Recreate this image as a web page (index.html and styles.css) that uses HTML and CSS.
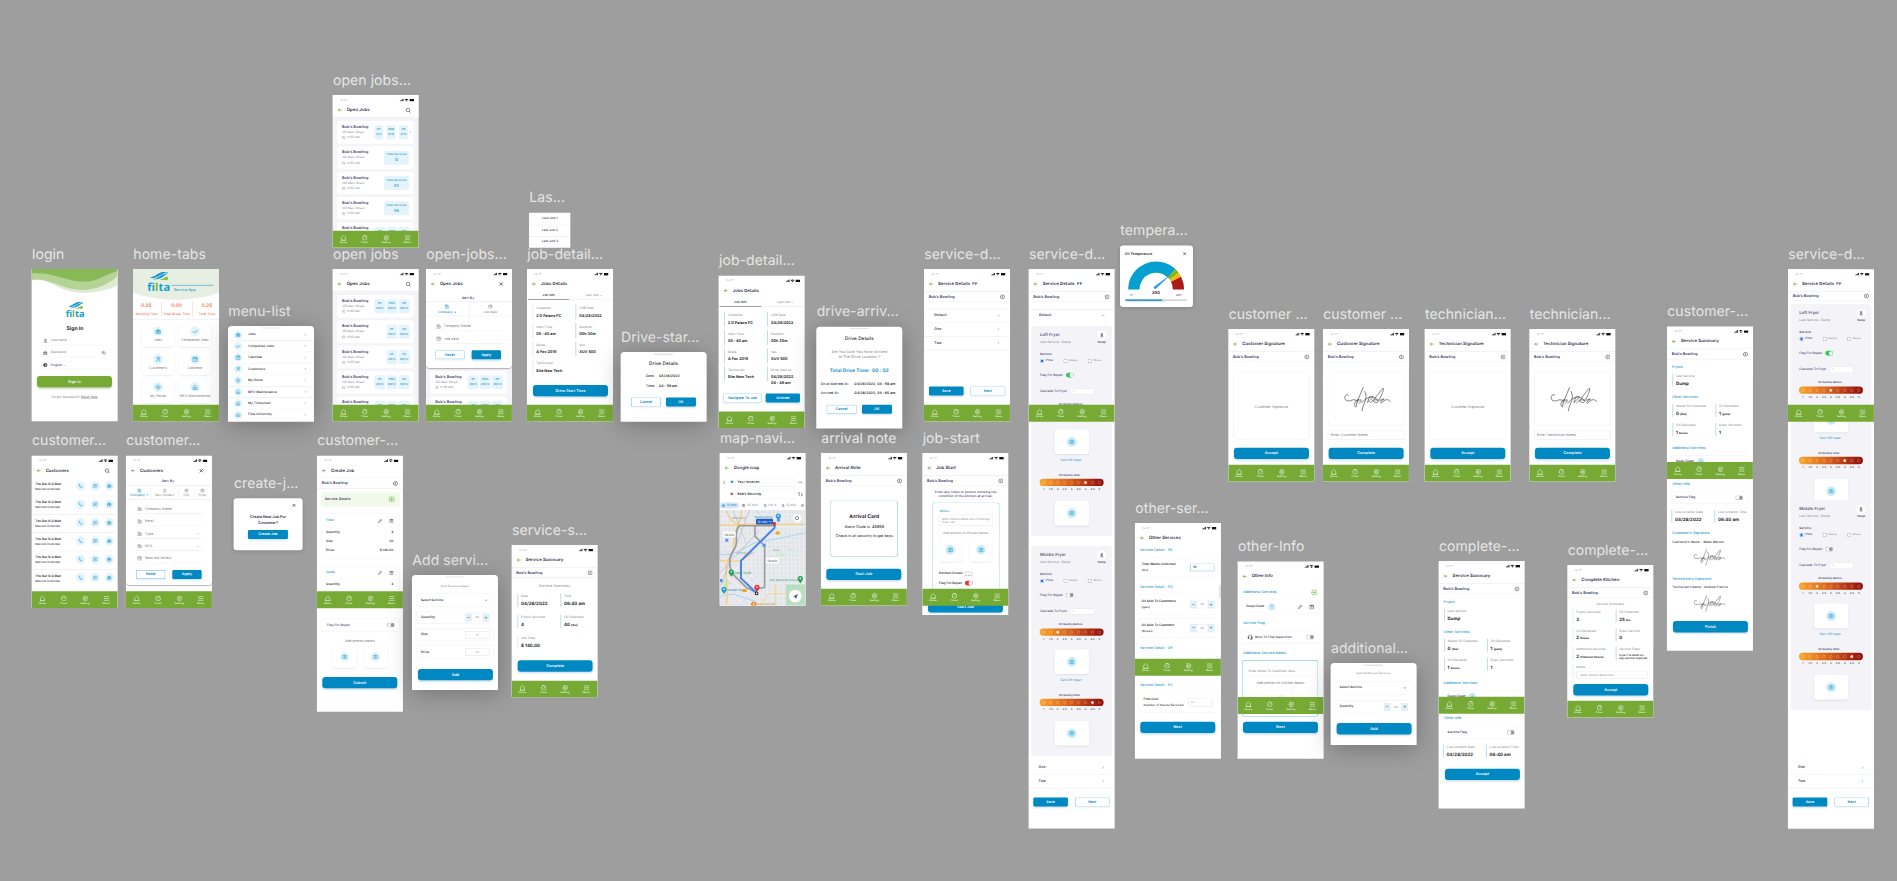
FILE: index.html
```html
<!DOCTYPE html>
<html lang="en">
<head>
<meta charset="utf-8">
<title>Filta Service App – screens</title>
<link rel="stylesheet" href="styles.css">
</head>
<body>
<main class="board"><div class="canvas" id="canvas"></div></main>
<script src="board.js"></script>
</body>
</html>
```

FILE: styles.css
```css
* { box-sizing: border-box; }
body { margin: 0; background: #9e9e9e; font-family: Inter, "Liberation Sans", sans-serif; }
.board { width: 1897px; height: 881px; overflow: hidden; position: relative; background: #9e9e9e; }
/* The canvas is drawn in units of a third of a pixel. The minute rotation keeps
   tiny type from being snapped to whole pixels. */
.canvas { position: absolute; left: 0; top: 0; width: 5691px; height: 2643px; transform: scale(0.333333) rotate(0.004deg); transform-origin: 0 0; line-height: 1; color: #2b2b3a; text-rendering: geometricPrecision; }

.label { position: absolute; font-size: 42px; line-height: 50px; color: #e6e6e6; white-space: nowrap; letter-spacing: 0.2px; }
.frame { position: absolute; overflow: hidden; background: #fff; letter-spacing: .012em; font-weight: 500; }
.sheet { border-radius: 11px 11px 0 0; box-shadow: 0 10px 70px rgba(0,0,0,.27); }
.dialog { border-radius: 9px; box-shadow: 0 2px 14px rgba(0,0,0,.16); }
.listbg { background: #f4f4f9; }

.stack { display: flex; flex-direction: column; align-items: flex-start; }
.stack > * { flex: none; }
.row { display: grid; height: 12px; align-items: center; align-self: stretch; }
.row > div { display: flex; align-items: center; white-space: nowrap; width: 0; height: 0; }
.mid { display: flex; width: 0; flex: none; justify-content: center; align-items: center; }
.end { display: flex; width: 0; flex: none; justify-content: flex-end; align-items: center; }
.row span, .row svg, .chip { flex: none; }
.ic { display: block; fill: none; stroke: currentColor; stroke-width: 2.2; stroke-linecap: round; stroke-linejoin: round; }
.ic.thick { stroke-width: 3.8; }
.art { display: block; }

.nav { position: absolute; left: 0; top: 407px; width: 100%; height: 51px; background: #76aa35; color: #fff; display: flex; }
.nav div { width: 64px; padding-top: 13px; display: flex; flex-direction: column; align-items: center; gap: 2px; font-size: 7.5px; }

/* surfaces */
.white { background: #fff; }
.line { background: #efeff2; }
.grey { background: #c9c9cc; }
.dark { background: #85858c; }
.orange-line { background: #fbd9cb; }
.sky { background: #b9dff0; }
.pale { background: #e0effb; }
.card { background: #fff; border-radius: 9px; box-shadow: inset 0 0 0 1.5px #f0f0f2; }
.job { background: #fff; border-radius: 8px; }
.tile { background: #fff; border-radius: 9px; box-shadow: 0 3px 6px rgba(60,70,90,.1); }
.mint { background: #f1f9eb; border-radius: 9px; }
.panel { background: #f3f3f8; border-radius: 10px; }
.bluebox { border-radius: 9px; box-shadow: inset 0 0 0 2px #8fcde8; }
.sigbox { border-radius: 13px; box-shadow: inset 0 0 0 1.5px #e9e9ec; }
.drop { background: #fff; border-radius: 0 0 12px 12px; box-shadow: 0 3px 4px rgba(0,0,0,.3); }
.input { background: #fff; border-radius: 3px; box-shadow: inset 0 0 0 1.5px #dedee2; }
.input.on { box-shadow: inset 0 0 0 2px #86c8e6; }
.mapfield { border-radius: 4px; background: #fff; box-shadow: inset 0 0 0 1.5px #ececee; }
.thumb { background: #e2e2e4; border-radius: 3px; }
.tabon { background: #d7e5fd; border-radius: 6px; }

/* fixed-size pieces that sit inside rows */
.chip { display: flex; align-items: center; justify-content: center; flex-direction: column; gap: 6px; }
.btn { background: #0088c2; color: #fff; font-weight: 600; font-size: 11.2px; border-radius: 9px; box-shadow: 0 4px 6px rgba(0,90,140,.2); }
.btn.green { background: #76aa35; box-shadow: 0 4px 6px rgba(70,110,30,.3); }
.btn.sm { border-radius: 4px; font-size: 10.6px; }
.btn.out { background: #fff; color: #0088c2; box-shadow: inset 0 0 0 1.5px #62b6da, 0 3px 5px rgba(0,90,140,.1); }
.count { background: #e5f3fb; border-radius: 5px; color: #2e9cc9; font-size: 8.6px; font-weight: 600; }
.count .big { font-size: 11px; }
.disc { border-radius: 50%; background: #e4f4fc; color: #1795cb; }
.disc.deep { background: #cbe9f6; }
.disc.plain { background: #fff; color: #333; }
.radio { border-radius: 50%; background: #fff; box-shadow: inset 0 0 0 1.5px #a5a5ad; }
.radio.on { background: #fff; box-shadow: inset 0 0 0 1px #5c93f5; }
.radio.on::after { content: ""; width: 7px; height: 7px; border-radius: 50%; background: #1264f0; }
.toggle { border-radius: 8px; background: #fff; box-shadow: inset 0 0 0 1.5px #a9a9ad; align-items: flex-end; padding: 1px; }
.toggle::after { content: ""; width: 11px; height: 12px; border-radius: 6px; background: #9c9ca0; }
.toggle.left { align-items: flex-start; }
.toggle.left::after { background: #fff; box-shadow: 0 0 0 1px #a9a9ad; }
.toggle.on { background: #34c759; box-shadow: none; }
.toggle.red { background: #f0302c; box-shadow: none; }
.toggle.on::after, .toggle.red::after { background: #fff; }
.stepper { flex-direction: row; gap: 0; justify-content: space-between; border-radius: 4px; background: #fff; box-shadow: inset 0 0 0 1px #e3eef4; overflow: hidden; font-size: 8px; color: #999; }
.stepper b { width: 21px; height: 100%; background: #e1f0f8; color: #146f9c; display: flex; align-items: center; justify-content: center; font-size: 13px; }
.scale { border-radius: 11px; background: linear-gradient(90deg, #faa62b, #d8641c 45%, #a5210f 85%, #8c0d0b); flex-direction: row; gap: 0; justify-content: space-around; padding: 0 2px; }
.scale i { width: 9px; height: 9px; border-radius: 50%; border: 1.4px solid rgba(255,255,255,.65); }
.scale i.on { background: #fff; border: 2px solid #ffd9c8; }
.ticks { flex-direction: row; gap: 0; justify-content: space-around; padding: 0 2px; font-size: 7.5px; color: #333; font-weight: 600; }
.ticks span { width: 18px; text-align: center; }

/* type */
.time { font-size: 8.5px; color: #8a8a8a; font-weight: 300; }
.title { font-size: 12.9px; font-weight: 600; color: #23233a; }
.name { font-size: 11.2px; font-weight: 600; color: #3a3b6c; }
.jobname { font-size: 11.4px; font-weight: 600; color: #41416f; }
.h1 { font-size: 15px; font-weight: 700; color: #222; letter-spacing: .01em; }
.h2 { font-size: 14px; font-weight: 500; color: #222; }
.total { font-size: 14.2px; font-weight: 700; color: #1b95c9; letter-spacing: .01em; }
.t8 { font-size: 8px; } .t85 { font-size: 8.8px; } .t9 { font-size: 9.3px; } .t95 { font-size: 9.7px; } .t10 { font-size: 10.3px; } .t11 { font-size: 11px; } .t12 { font-size: 12.6px; } .t7 { font-size: 7.6px; }
.b { font-weight: 600; color: #1e1e24; }
.m { font-weight: 600; }
.g { color: #7c7c86; font-weight: 400; }
.lg { color: #b3b3ba; }
.navy { color: #3f4069; }
.blue { color: #2299cc; }
.orange { color: #f0754e; }
.greenink { color: #6faa2f; }
.redink { color: #e5433a; }
.darkink { color: #2c2c35; }
.value { font-size: 10.9px; font-weight: 700; color: #1c1c22; }
.value.big { font-size: 13px; }
.value small { font-size: 8.6px; }
.head { font-size: 10.6px; color: #2299cc; font-weight: 500; }
.reset { text-decoration: underline; color: #555; }
.logo { font-family: "Open Sans", sans-serif; font-weight: 700; letter-spacing: 0; }
```

FILE: board.js
```js
const ICONS = {
  arrow: 'M20 12H5M11 6l-6 6 6 6',
  search: 'M4 11a7.500 7.500 0 1 0 15 0a7.500 7.500 0 1 0-15 0M17 17l4 4',
  x: 'M5 5l14 14M19 5L5 19',
  minus: 'M3 12h18',
  info: 'M2 12a10 10 0 1 0 20 0a10 10 0 1 0-20 0M12 11v6M12 7v1',
  home: 'M3 21V10l9-8 9 8v11zM1 22h22',
  timer: 'M2 12a10 10 0 1 0 20 0a10 10 0 1 0-20 0M12 13l5-5M8 1h8',
  gear: 'M12 2l4 2 5 0 1 5 1 3-3 4-2 5-6 1-5-1-3-5-2-4 3-4 2-5zM8 12a4 4 0 1 0 8 0a4 4 0 1 0-8 0',
  menu: 'M2 4h20M2 12h20M2 20h20',
  jobs: 'M3 8h18v13H3zM8 8V4h8v4M3 13h18M12 11v7M9 15h6',
  done: 'M1 12l5 5L14 9M11 16l2 2L23 7',
  cal: 'M3 5h18v16H3zM3 10h18M8 2v5M16 2v5M10 15l2 2 4-4',
  users: 'M7 8a5 5 0 1 0 10 0a5 5 0 1 0-10 0M4 22c0-10 16-10 16 0M18 3c4 2 4 7 0 9',
  user: 'M7 8a5 5 0 1 0 10 0a5 5 0 1 0-10 0M4 22c0-10 16-10 16 0z',
  route: 'M12 1l11 11-11 11L1 12zM8 12a4 4 0 1 0 8 0a4 4 0 1 0-8 0',
  house: 'M3 11l9-9 9 9v11H3zM9 13h6v5H9z',
  phone: 'M5 3l4 5-2 3 7 7 3-2 4 4-4 2C10 20 4 14 3 6z',
  chat: 'M3 4h18v14H9l-6 4zM8 9h8M8 13h5',
  cam: 'M2 6h20v14H2zM8 13a4 4 0 1 0 8 0a4 4 0 1 0-8 0M8 3h8',
  pencil: 'M3 21l2-6L18 3l3 3L9 19zM14 7l3 3',
  trash: 'M4 6h16v16H4zM2 6h20M9 2h6M12 10v6',
  plus: 'M1 12a11 11 0 1 0 22 0a11 11 0 1 0-22 0M12 6v12M6 12h12',
  chev: 'M9 5l7 7-7 7',
  down: 'M5 9l7 7 7-7',
  left: 'M15 4l-8 8 8 8',
  eye: 'M1 12c6-9 16-9 22 0c-6 9-16 9-22 0M9 12a3 3 0 1 0 6 0a3 3 0 1 0-6 0M3 3l18 18',
  lock: 'M3 11h18v11H3zM7 11c0-11 10-11 10 0M8 16h8',
  globe: 'M3 12a9 9 0 1 0 18 0a9 9 0 1 0-18 0M7 12a5 5 0 1 0 10 0a5 5 0 1 0-10 0',
  clock: 'M2 12a10 10 0 1 0 20 0a10 10 0 1 0-20 0M12 6v6l5 3',
  firm: 'M3 22V3h10v19M13 9h8v13H2M6 8h4M6 13h4M16 14h2',
  head: 'M4 15V10c0-10 16-10 16 0v5M4 12v6h3v-6zM17 12v6h3v-6zM20 18c0 4-4 4-7 4',
  therm: 'M9 14V3h6v11a5 5 0 1 1-6 0M12 8v9',
  swap: 'M5 4v12l4 4M5 4L2 8M18 20V7M18 20l4-4'
};
const ic = (n, s = 12, c = '') => `<svg class="ic ${c}" width="${s}" height="${s}" viewBox="0 0 24 24"><path d="${ICONS[n]}"/></svg>`;
const t = (c, s) => `<span class="${c}">${s}</span>`;
const mid = h => `<span class="mid">${h}</span>`;
const end = h => `<span class="end">${h}</span>`;
const chip = (w, h, c, html = '') => `<span class="chip ${c}" style="width:${w}px;height:${h}px">${html}</span>`;
const disc = (n, s = 28, i = 14, c = '') => mid(chip(s, s, 'disc ' + c, ic(n, i)));

/* A stack places its children one below the other; gaps follow from each child's y */
function stack(kids) {
  let at = 0;
  return kids.flat(9).map(k => { const m = k.y - at; at = k.y + k.h; return k.html(m); }).join('');
}
const row = (cy, ...cells) => ({ y: cy - 6, h: 12, html: m => {
  const cols = cells.map((c, i) => i < cells.length - 1 ? (cells[i + 1][0] - c[0]) + 'px' : 'auto').join(' ');
  return `<div class="row" style="margin-top:${m}px;padding-left:${cells[0][0]}px;grid-template-columns:${cols}">${cells.map(c => `<div>${c[1]}</div>`).join('')}</div>`;
} });
const box = (x, y, w, h, c, kids = []) => ({ y, h, html: m => `<div class="stack ${c}" style="margin:${m}px 0 0 ${x}px;width:${w}px;height:${h}px">${stack(kids)}</div>` });
const art = (x, y, w, h, body) => ({ y, h, html: m => `<svg class="art" style="margin:${m}px 0 0 ${x}px" width="${w}" height="${h}" viewBox="0 0 ${w} ${h}">${body}</svg>` });
const rule = (y, x = 0, w = 258) => box(x, y, w, 1.5, 'line');

const NAV = '<div class="nav">' + [['home', 'Home'], ['timer', 'Timer'], ['gear', 'Setting'], ['menu', 'Menu']].map(([i, l]) => `<div>${ic(i, 17)}${l}</div>`).join('') + '</div>';
const STATUS = '<svg class="art" width="44" height="10" viewBox="0 0 44 10"><path d="M0 9V7h2v2zM3 9V5h2v4zM6 9V3h2v6zM9 9V1h2.500v8zM15 4c3-4 8-4 11 0l-1.500 1.500c-2-2-6-2-8 0zM18 7c1-2 4-2 5 0l-2.500 3zM30 2h13v7H30z" fill="#111"/></svg>';

const label = (x, cy, s) => `<div class="label" style="left:${x}px;top:${cy - 25}px">${s}</div>`;
function frame(x, y, w, h, name, kids, { c = '', nav = true } = {}) {
  return label(x + 1, y - 45, name) + `<section class="frame stack ${c}" style="left:${x}px;top:${y}px;width:${w}px;height:${h}px">${stack(kids)}${nav ? NAV : ''}</section>`;
}
const head = (title, right = '') => [
  row(15, [22, t('time', '12:47')], [201, STATUS]),
  row(45, [21, mid(`<span class="greenink">${ic('arrow', 14, 'thick')}</span>`)], [42, t('title', title)], [226, mid(right ? `<span class="darkink">${ic(right, right === 'x' ? 14 : 17, right === 'x' ? 'thick' : '')}</span>` : '')]),
  rule(66)
];
const sub = (cy = 83) => [row(cy, [14, t('name', "Bob’s Bowling")], [235, mid(`<span class="darkink">${ic('info', 15)}</span>`)]), rule(cy + 14)];
const big = (x, y, s, c = '') => row(y + 17, [x, chip(225, 34, 'btn ' + c, s)]);
const pair = (y, x1, a, w1, x2, b, w2) => row(y, [x1, chip(w1, 27, 'btn sm ' + (a[1] || ''), a[0])], [x2, chip(w2, 27, 'btn sm ' + (b[1] || ''), b[0])]);
const handle = box(101, 5, 56, 2, 'grey');
const field = (cy, icon, s, right = '', x = 41) => [row(cy, [x, mid(`<span class="g">${ic(icon, 14)}</span>`)], [x + 16, t('t10 g', s)], [216, mid(right)]), rule(cy + 13, 27, 202)];
const toggle = (c = '') => chip(23, 14, 'toggle ' + c);
const stepper = chip(74, 25, 'stepper', '<b>−</b>00<b>+</b>');

const LOGO = s => `<g transform="scale(${s})"><path d="M14 21C24 19 33 14 39 8C46 5 53 4 58 5C52 6 47 10 41 15C34 19 24 22 14 21z" fill="#1d9fd2"/><path d="M7 15C20 15 26 5 40 1C48 0 54 1 57 2C43 4 36 12 29 15C20 19 13 18 7 15z" fill="#1592c8"/><path d="M20 16C32 15 36 6 51 3" stroke="#fff" stroke-width="1.500" fill="none"/><path d="M31 23C40 22 45 17 51 14C56 13 58 19 53 24C50 20 43 23 31 23z" fill="#82bb2e"/><text class="logo" x="0" y="51" font-size="30" fill="#129fd1" textLength="62">fi<tspan fill="#7ab52f">l</tspan>ta</text></g>`;

const login = frame(95, 807, 258, 457, 'login', [
  art(0, 0, 258, 75, '<path d="M0 0H258V50C190 78 130 76 84 56C50 40 24 26 0 34z" fill="#dfead2"/><path d="M0 0H258V20C220 55 170 72 112 58C64 44 36 26 0 33z" fill="#b6d397"/><path d="M0 0H258V6C218 16 206 36 160 38C105 38 62 8 0 13z" fill="#87b956"/>'),
  art(102, 98, 66, 56, LOGO(.92)),
  row(178, [130, mid(t('h1', 'Sign In'))]),
  row(214, [41, mid(ic('user', 13))], [57, t('t95 g', 'Username')]), rule(227, 27, 203),
  row(251, [41, mid(ic('lock', 14))], [57, t('t95 g', 'Password')], [216, mid(`<span class="g">${ic('eye', 14)}</span>`)]), rule(263, 27, 203),
  row(288, [41, mid(ic('globe', 14, 'thick'))], [57, t('t95 navy', 'English ⌄')]), rule(299, 27, 203),
  big(16, 321, 'Sign In', 'green'),
  row(386, [129, mid(t('t95 g', 'Forgot Password? <span class="reset">Reset Now</span>'))])
], { nav: false });

const tiles = [['jobs', 'Jobs', 'done', 'Completed Jobs'], ['users', 'Customers', 'cal', 'Calendar'], ['route', 'My Route', 'house', 'MFU Maintenance']];
const stat = s => mid(`<span class="h2 b"><span class="orange">${s}</span></span>`);
const home = frame(399, 807, 258, 457, 'home-tabs', [
  art(0, 0, 258, 95, `<path d="M0 0H258V72Q129 114 0 72z" fill="#e7efe2"/><g transform="translate(43 8)">${LOGO(1.11)}</g><path d="M115 49H242" stroke="#46a9d2" stroke-width="2"/>`),
  row(61, [122, t('t11 blue', 'Service App')]),
  row(111, [40, stat('0.25')], [131, stat('0.00')], [222, stat('0.25')]),
  row(120, [85, chip(1.5, 46, 'orange-line')], [178, chip(1.5, 46, 'orange-line')]),
  row(136, [41, mid(t('t95 orange', 'Working Time'))], [131, mid(t('t95 orange', 'Total Break Time'))], [222, mid(t('t95 orange', 'Total Time'))]),
  rule(151),
  tiles.map((a, i) => [
    row(197 + i * 84, [26, chip(98, 72, 'tile')], [137, chip(98, 72, 'tile')]),
    row(187 + i * 83.5, [75, disc(a[0], 30, 17)], [186, disc(a[2], 30, 17)]),
    row(213 + i * 83.5, [75, mid(t('t10 g', a[1]))], [186, mid(t('t10 g', a[3]))])])
]);

const menu = frame(684, 978, 258, 287, 'menu-list', [handle,
  [['jobs', 'Jobs'], ['done', 'Completed Jobs'], ['cal', 'Calendar'], ['users', 'Customers'], ['route', 'My Route'], ['house', 'MFU Maintenance'], ['house', 'My Timesheet'], ['house', 'Filta University']].map(([i, s], n) => [
    row(26 + n * 34.3, [30, disc(i, 25, 15)], [60, t('t95 darkink', s)], [232, mid(`<span class="blue">${ic('chev', 8, 'thick')}</span>`)]), n < 7 ? rule(43 + n * 34.3) : []])
], { nav: false, c: 'sheet' });

const jobCard = (y, chips) => box(13, y, 230, 68, 'job', [
  row(18, [15, t('jobname', "Bob’s Bowling")]),
  row(34, [15, t('t85 g', '123 Main Street')], ...chips),
  row(50, [20, mid(`<span class="g">${ic('clock', 10)}</span>`)], [29, t('t85 g', '11:00 AM')])
]);
const cnt = (w, a, b, big) => chip(w, 42, 'count', `<span>${a}</span><span class="${big ? 'big' : ''}">${b}</span>`);
const three = [[112, cnt(33, 'FF', '00/3')], [148.5, cnt(32, 'PRO', '00/12')], [185, cnt(33, 'FB', '00/12')]];
const two = [[148.5, cnt(32, 'FF', '00/3')], [185, cnt(33, 'FO', '00/12')]];
const jobsList = (list, start = 78) => list.map((c, i) => jobCard(start + i * 76, c));
const HB = box(0, 0, 258, 67, 'white', head('Open Jobs', 'search'));
const openA = frame(998, 285, 258, 458, 'open jobs...', [HB,
  jobsList([[[112, cnt(27, 'FF', '0/3')], [149, cnt(27, 'MIN', '0/10')], [186, cnt(27, 'FB', '0/12')], [220, mid(`<span class="blue">${ic('chev', 8, 'thick')}</span>`)]],
    ...['12', '03', '06'].map(n => [[141, cnt(75, 'Total Services', n, 1)]]), three])], { c: 'listbg' });
const openB = frame(998, 807, 258, 457, 'open jobs', [HB, jobsList([three, two, two, three, three])], { c: 'listbg' });
const tabs2 = (y) => [row(y, [63, mid(`<span class="blue">${ic('firm', 14)}</span>`)], [193, mid(`<span class="g">${ic('cal', 13)}</span>`)]),
  row(y + 17, [63, mid(t('t95 blue', 'Company ↓'))], [130, chip(1.5, 44, 'line')], [193, mid(t('t95 g', 'Job date'))])];
const openC = frame(1278, 807, 258, 457, 'open-jobs...', [
  box(0, 0, 258, 297, 'drop', [head('Open Jobs', 'x').slice(0, 2), row(86, [126, mid(t('t10 navy', 'Sort By'))]), rule(97),
    tabs2(112), rule(140), field(172, 'firm', 'Company Name', '', 38), field(209, 'cal', 'Job date', '', 38),
    pair(257, 28, ['Reset', 'out'], 88, 137, ['Apply'], 88)]),
  jobsList([three, three], 306)], { c: 'listbg' });

const pairCells = (y, a, b, o = {}) => {
  const x1 = o.x1 || 16, x2 = o.x2 || 145, v = o.v || 20, c = o.big ? 'value big' : 'value', g = o.gap || 12;
  return [row(y + v / 2, [x1, chip(3, o.h || 44, a[2] || 'sky')], ...(b ? [[x2, chip(3, o.h || 44, 'sky')]] : [])),
    row(y, [x1 + g, t('t9 g', a[0])], ...(b ? [[x2 + g, t('t9 g', b[0])]] : [])),
    row(y + v, [x1 + g, t(c, a[1])], ...(b ? [[x2 + g, t(c, b[1])]] : []))];
};
const detailTabs = [row(80, [65, mid(t('t9 m darkink', 'Job Info'))], [200, mid(t('t9 g', 'Last Job ⌄'))]), rule(91), box(3, 91, 124, 2, 'dark')];
const detail = frame(1581, 807, 258, 457, 'job-detail...', [head('Jobs Details').slice(0, 2), detailTabs,
  pairCells(119, ['Customer', '2 D Palace FC', 'pale'], ['JOB Date', '04/28/2022']),
  pairCells(174, ['Start Time', '05 : 40 am', 'pale'], ['Duration', '00h 30m']),
  pairCells(229, ['Route', 'A Foc 2019', 'pale'], ['Van', 'XUV 500']),
  pairCells(284, ['Technician', 'Bite New Tech', 'pale']),
  big(18, 348, 'Drive Start Time')]);
const detail2 = frame(2156, 827, 258, 457, 'job-detail...', [head('Jobs Details').slice(0, 2), detailTabs,
  pairCells(120, ['Customer', '2 D Palace FC'], ['JOB Date', '04/28/2022']),
  pairCells(175, ['Start Time', '05 : 40 am'], ['Duration', '00h 30m']),
  pairCells(230, ['Route', 'A Foc 2019'], ['Van', 'XUV 500']),
  pairCells(284, ['Technician', 'Bite New Tech'], ['Drive Start at', '04/28/2022']),
  row(320, [157, t('value', '04 : 48 am')]),
  pair(366, 14, ['Navigate To Job', 'out'], 115, 141, ['Arrived'], 103)]);

const last = frame(1587, 638, 124, 105, 'Las...', [row(18, [63, mid(t('t9', 'Last Job 1'))]), rule(36, 0, 124), row(53, [63, mid(t('t9', 'Last Job 2'))]), rule(70, 0, 124), row(87, [63, mid(t('t9', 'Last Job 3'))])], { nav: false });
const driveStart = frame(1862, 1056, 258, 209, 'Drive-star...', [handle, row(36, [129, mid(t('h2', 'Drive Details'))]),
  row(73, [75, t('t10', 'Date:')], [115, t('t10 b', '04/28/2022')]), row(101, [75, t('t10', 'Time:')], [115, t('t10 b', '04 : 58 am')]),
  pair(149, 31, ['Cancel', 'out'], 90, 136, ['OK'], 90)], { nav: false, c: 'sheet' });
const driveArr = frame(2449, 980, 258, 305, 'drive-arriv...', [handle, row(35, [129, mid(t('h2', 'Drive Details'))]),
  row(74, [129, mid(t('t11 g', 'Are You Sure You Have Arrived'))]), row(90, [129, mid(t('t11 g', 'At The Drive Location ?'))]),
  row(131, [129, mid(t('total', 'Total Drive Time: &nbsp;00 : 02'))]),
  row(173, [13, t('t10', 'Drive Started At:')], [114, t('t10 b', '04/28/2022, 04 : 58 am')]),
  row(200, [13, t('t10', 'Arrived At:')], [114, t('t10 b', '04/28/2022, 04 : 60 am')]),
  pair(247, 31, ['Cancel', 'out'], 90, 137, ['OK'], 90)], { nav: false, c: 'sheet' });

const item = (cy, s, i = 'chev', x = 31) => row(cy, [x, t('t10 m navy', s)], [223, mid(`<span class="blue">${ic(i, 9, 'thick')}</span>`)]);
const svcD = frame(2772, 807, 258, 457, 'service-d...', [head('Service Details &nbsp;FF'), sub(), rule(118), item(139, 'Default'), rule(160), item(180, 'One'), rule(201), item(221, 'Two'), rule(242),
  pair(365, 15, ['Save'], 104, 139, ['Next', 'out'], 105)]);

const scale = (cy, n) => [row(cy, [33, chip(192, 22, 'scale', Array.from({ length: 9 }, (_, i) => `<i class="${i === n ? 'on' : ''}"></i>`).join(''))]),
  row(cy + 22, [33, chip(192, 10, 'ticks', ['1', '1.5', '2', '2.5', '3', '3.5', '4', '4.5', '5'].map(v => `<span>${v}</span>`).join(''))])];
const photo = cy => [row(cy, [78, chip(103, 74, 'tile')]), row(cy, [129, disc('cam', 29, 15, 'deep')])];
const fryer = (y, name, on, n1, n2) => [box(8, y - 27, 242, 630, 'panel'),
  row(y, [34, t('t12 navy', name)], [219, disc('therm', 28, 15, 'plain')]),
  row(y + 23, [34, t('t9 g', 'Last Service : Dump')], [219, mid(t('t85 b', 'Temp'))]),
  row(y + 57, [34, t('t9 m navy', 'Service')]),
  row(y + 77, [34, chip(13, 13, 'radio on')], [52, t('t85 navy', 'Filter')], [104, chip(13, 13, 'radio')], [121, t('t85 g', 'Dump')], [177, chip(13, 13, 'radio')], [195, t('t85 g', 'None')]),
  row(y + 120, [34, t('t9 navy', 'Flag For Repair')], [112, toggle(on ? 'on' : '')]),
  row(y + 169, [34, t('t9 navy', 'Cascade To Fryer')], [125, chip(73, 21, 'input')], [132, t('t8 lg', '1')]),
  row(y + 208, [126, mid(t('t8 m navy', 'Oil Quality Before'))]), scale(y + 231, n1), photo(y + 320),
  row(y + 377, [126, mid(t('t9 blue', 'Turn Off Input'))]),
  row(y + 420, [123, mid(t('t8 m navy', 'Oil Quality After'))]), scale(y + 442, n2), photo(y + 534)];
const svcTail = [item(1495, 'One', 'chev', 30), rule(1516), item(1536, 'Two', 'chev', 30), rule(1556), pair(1598, 14, ['Save'], 104, 139, ['Next', 'out'], 104)];
const svcLong = frame(3086, 807, 258, 1678, 'service-d...', [head('Service Details &nbsp;FF'), sub(), rule(120), item(139, 'Default', 'minus'), fryer(198, 'Left Fryer', 1, 4, 6), fryer(858, 'Middle Fryer', 0, 2, 7), svcTail]);
const svcLast = frame(5364, 807, 258, 1679, 'service-d...', [head('Service Details &nbsp;FF'), sub(80), fryer(132, 'Left Fryer', 1, 4, 6), fryer(720, 'Middle Fryer', 0, 2, 7), svcTail]);

const pt = (r, a) => `${(84.5 + r * Math.cos(a * Math.PI / 180)).toFixed(1)} ${(86 - r * Math.sin(a * Math.PI / 180)).toFixed(1)}`;
const arc = (a, b, c) => `<path d="M${pt(84, a)}A84 84 0 0 1 ${pt(84, b)}L${pt(50, b)}A50 50 0 0 0 ${pt(50, a)}z" fill="${c}"/>`;
const temp = frame(3360, 736, 219, 185, 'tempera...', [
  row(25, [15, t('t10 b', 'Oil Temperature')], [194, mid(ic('x', 12, 'thick'))]),
  art(24, 46, 170, 92, arc(180, 46, '#059fd0') + arc(46, 36, '#86b80f') + arc(36, 27, '#f5b911') + arc(27, 0, '#ab1919') + '<path d="M77 79L132 38L84 84a5 5 0 0 1-7-5z" fill="#2d9df0"/>'),
  row(142, [108, mid(t('t12 b', '350'))]), row(149, [31, t('t7', '0°')], [168, t('t7', '450°')]),
  row(164, [16, chip(186, 4, 'grey')]), row(164, [16, chip(115, 4, 'btn')], [131, mid(chip(9, 9, 'radio'))])
], { nav: false, c: 'dialog' });

const customers = frame(95, 1367, 258, 457, 'customer...', [head('Customers', 'search').slice(0, 2), [0, 1, 2, 3, 4, 5].map(i => {
  const y = 91 + i * 55;
  return [row(y - 5, [11, t('t9 b', 'The Bar B Q Man')]), row(y, [147, disc('phone')], [191, disc('chat')], [233, disc('jobs')]), row(y + 9, [11, t('t8', 'Malcolm Cedric&amp;A.')]), i < 5 ? rule(y + 29) : []];
})]);
const dn = `<span class="g">${ic('down', 7, 'thick')}</span>`;
const customers2 = frame(378, 1367, 258, 457, 'customer...', [box(0, 0, 258, 388, 'drop', [head('Customers', 'x').slice(0, 2), row(77, [126, mid(t('t10 navy', 'Sort By'))]), rule(89),
  row(104, [40, mid(`<span class="blue">${ic('firm', 13)}</span>`)], [116, mid(`<span class="g">${ic('user', 13)}</span>`)], [181, mid(`<span class="g">${ic('globe', 13)}</span>`)], [229, mid(`<span class="g">${ic('cam', 13)}</span>`)]),
  row(110, [74, chip(1.5, 42, 'line')], [157, chip(1.5, 42, 'line')], [205, chip(1.5, 42, 'line')]),
  row(120, [40, mid(t('t95 blue', 'Company ↑'))], [116, mid(t('t95 g', 'Key contact'))], [181, mid(t('t95 g', 'City'))], [229, mid(t('t95 g', 'Fryer'))]), rule(131),
  field(160, 'firm', 'Company Name'), field(197, 'firm', 'Email'), field(234, 'firm', 'Type', dn), field(271, 'firm', 'NCA', dn), field(308, 'cal', 'Near me (miles)'),
  pair(356, 30, ['Reset', 'out'], 88, 139, ['Apply'], 88)])]);
const createJ = frame(701, 1495, 207, 156, 'create-j...', [row(21, [181, mid(ic('x', 12, 'thick'))]), row(56, [103, mid(t('t11 m', 'Create New Job For'))]), row(73, [103, mid(t('t11 m', 'Customer?'))]), row(108, [43, chip(120, 27, 'btn sm', 'Create Job')])], { nav: false, c: 'dialog' });

const kv = (y, k, v) => row(y, [27, t('t95 m', k)], [229, end(t('t9 m', v))]);
const svcHead = (y, s) => row(y, [27, t('t9 blue m', s)], [189, mid(ic('pencil', 13))], [223, mid(ic('trash', 13))]);
const createJob = frame(951, 1367, 258, 768, 'customer-...', [head('Create Job'), sub(),
  box(11, 111, 238, 42, 'mint', [row(20, [12, t('t10 m navy', 'Service Details')], [213, mid(`<span class="greenink">${ic('plus', 18)}</span>`)])]),
  box(11, 173, 237, 136, 'card'), svcHead(195, 'Filter'), kv(230, 'Quantity', '3'), kv(258, 'Size', '20'), kv(285, 'Price', '$ 140.00'),
  box(11, 332, 237, 120, 'card'), svcHead(351, 'Dump'), kv(387, 'Quantity', '3'),
  box(13, 488, 236, 40, 'card'), row(508, [30, t('t9 navy', 'Flag For Repair')], [210, toggle()]),
  row(557, [129, mid(t('t10 g', 'Add photos below'))]),
  row(602, [49, chip(69, 70, 'tile')], [141, chip(69, 70, 'tile')]), row(603, [83, disc('cam', 29, 15)], [175, disc('cam', 29, 15)]),
  big(16, 664, 'Submit')]);
const formRow = (y, s, right) => [box(12, y - 20, 234, 40, 'card'), row(y, [27, t('t95 m', s)], [159, right])];
const selectRow = (y) => [box(12, y - 20, 234, 40, 'card'), row(y, [27, t('t9 m', 'Select Service')], [222, mid(ic('down', 9, 'thick'))])];
const addServ = frame(1236, 1725, 258, 345, 'Add servi...', [handle, row(34, [129, mid(t('t85 g', 'Add Service Details'))]),
  selectRow(75), formRow(127, 'Quantity', stepper), formRow(179, 'Size', chip(74, 23, 'input t8 lg', '10')), formRow(231, 'Price', chip(74, 23, 'input t8 lg', '00')), big(18, 282, 'Add')], { nav: false, c: 'sheet' });
const B = { big: 1, v: 21, x1: 17, x2: 146, h: 40, gap: 11 };
const svcSum = frame(1535, 1635, 258, 457, 'service-s...', [head('Service Summary'), sub(), row(121, [129, mid(t('t11 g', 'Service Summary'))]),
  pairCells(155, ['Date', '04/28/2022'], ['Time', '06:40 am'], B), pairCells(218, ['Fryers Serviced', '4'], ['Oil Collected', '40 <small>(lbs)</small>'], B), pairCells(281, ['Job Total', '$ 140.00', 'pale'], null, B), big(18, 346, 'Complete')]);

let grid = '';
for (let i = 0; i < 24; i++) grid += `<path d="M${i * 12} 0V287M0 ${i * 13}H258" stroke="#f2f3f5" stroke-width="1.600"/>`;
const tag = (x, y, w, s, f, c) => `<rect x="${x}" y="${y}" width="${w}" height="17" rx="3" fill="${f}"/><text x="${x + w / 2}" y="${y + 12}" font-size="9.500" text-anchor="middle" fill="${c}">${s}</text>`;
const pin = (x, y, c) => `<path d="M${x} ${y + 12}l-7-10a8 8 0 1 1 14 0z" fill="${c}"/><circle cx="${x}" cy="${y - 3}" r="2.500" fill="#fff"/>`;
const MAP = `<rect width="258" height="287" fill="#e2e5e9"/>${grid}
<g transform="rotate(40 60 220)"><rect x="-30" y="170" width="150" height="130" fill="#e4e6ec"/><path d="M-20 180H120M-20 196H120M-20 212H120M-20 228H120M-20 244H120M-20 260H120M0 170V300M24 170V300M48 170V300M72 170V300M96 170V300" stroke="#f6f7f9" stroke-width="2"/></g>
<path d="M199 223h59v64h-59z" fill="#b8dfc0"/><path d="M170 130h30v8h-30zM205 115h20v6h-20zM0 215l20-10 15 15-20 12z" fill="#cfe8d0"/>
<path d="M0 132C60 140 80 100 120 95S200 80 258 68" stroke="#a8d9ee" stroke-width="3" fill="none"/><path d="M0 262C40 240 60 262 110 275" stroke="#a8d9ee" stroke-width="3" fill="none"/>
<path d="M20 0C30 30 40 40 60 43H258M66 0L58 42C30 90 55 110 25 150C10 180 30 230 20 287M0 45H60M0 150C60 160 70 150 95 130" stroke="#f5cf78" stroke-width="4" fill="none"/>
<path d="M168 220V287M120 287L150 250H200" stroke="#f5d592" stroke-width="3" fill="none"/>
<path d="M90 0L0 235M120 60L0 190" stroke="#b79bd2" stroke-width="1.500" fill="none"/><path d="M110 0L150 55M40 0L80 100" stroke="#a2c6a8" stroke-width="1.500" fill="none"/>
<path d="M165 47H58C38 75 62 95 42 120C24 145 30 160 35 188L80 232L112 248M106 48V78L135 108V232L112 236" stroke="#999c9f" stroke-width="5" fill="none" stroke-linejoin="round"/>
<path d="M165 38V53L64 152V205L110 248" stroke="#4683ee" stroke-width="6" fill="none" stroke-linejoin="round"/>
<text x="105" y="25" font-size="8" fill="#2c9bb5">Boat Landing</text><text x="36" y="27" font-size="7" fill="#8b8f96">SUNNYSIDE</text><text x="50" y="132" font-size="7" fill="#8b8f96">CENTRAL CITY</text><text x="160" y="122" font-size="7" fill="#8b8f96">COLE</text><text x="42" y="193" font-size="9" fill="#2f9e56">Coors Field</text><text x="150" y="212" font-size="8" fill="#2f9e56">City Park Golf Course</text><text x="20" y="243" font-size="9" fill="#2787b5">Larimer Sq</text><text x="110" y="286" font-size="8" fill="#e08a2a">Downtown Bar</text>
${pin(176, 20, '#2aa5dd')}${pin(35, 188, '#2f9e56')}${pin(242, 208, '#2f9e56')}${pin(13, 240, '#1f9fc0')}${pin(102, 285, '#ef8f20')}${pin(112, 234, '#e3342b')}
<circle cx="111" cy="250" r="4" fill="#fff" stroke="#222" stroke-width="3"/><path d="M160 36h8v10h-8z" fill="#d33"/><path d="M168 64h12v9h-12zM69 237h12v9H69z" fill="#e8a812"/>
<path d="M129 101h9v9h-9zM17 86h9v9h-9zM0 207h9v9H0zM172 25h9v9h-9z" fill="#5b93ea"/>
${tag(109, 26, 51, '12 min ↰', '#1b5dc0', '#fff')}${tag(10, 65, 38, '13 min', '#fff', '#444')}${tag(139, 143, 38, '13 min', '#fff', '#444')}
<circle cx="232" cy="24" r="13" fill="#fff"/><circle cx="232" cy="24" r="5" fill="none" stroke="#555" stroke-width="2"/>
<circle cx="227" cy="258" r="19" fill="#fff"/><path d="M220 260l15-9-6 16-3-6z" fill="#555"/>`;
const map = frame(2159, 1359, 258, 458, 'map-navi...', [head('Google map').slice(0, 2),
  row(88, [14, mid(ic('left', 14))], [37, mid('<span class="blue t10">●</span>')], [47, chip(181, 28, 'mapfield')], [53, t('t10', 'Your location')], [242, mid(t('t8', '•••'))]),
  row(105, [37, mid(t('t8 g', '⋮'))]),
  row(123, [37, mid('<span class="redink t10">●</span>')], [47, chip(181, 28, 'mapfield')], [53, t('t10', "Bob’s Bowling")], [242, mid(ic('swap', 15))]),
  row(157, [2, chip(55, 18, 'tabon')], [6, `<span class="blue">${ic('jobs', 11)}</span>`], [21, t('t9 m', '<span class="blue">12 min</span>')], [67, ic('cam', 10)], [82, t('t95 g', '35 min')], [132, ic('user', 10)], [144, t('t95 g', '1 hr 4')], [186, ic('user', 10)], [199, t('t95 g', '12 min')], [244, ic('route', 10)]),
  art(0, 171, 258, 287, MAP)], { nav: false });

const arrival = frame(2463, 1359, 258, 458, 'arrival note', [head('Arrival Note'), sub(), box(28, 142, 203, 169, 'bluebox', [row(47, [102, mid(t('h1', 'Arrival Card'))]), row(80, [102, mid(t('t11', 'Alarm Code Is &nbsp;<span class="b">45658</span>'))]), row(106, [102, mid(t('t11', 'Check in at security to get keys'))])]), big(16, 347, 'Start Job')]);
const jobStart = frame(2767, 1359, 258, 486, 'job-start', [head('Job Start'), sub(), row(118, [130, mid(t('t95 navy', 'Enter any notes or photos showing the'))]), row(129, [130, mid(t('t95 navy', 'condition of the kitchen at arrival.'))]),
  box(30, 148, 202, 280, 'bluebox', [row(26, [22, t('t9 blue', 'Notes:')]), box(20, 36, 161, 34, 'input', [row(13, [10, t('t8 g', 'Enter Kitchen Notes here if Filtering')]), row(24, [10, t('t8 g', 'Fryer, etc.')])]),
    row(93, [100, mid(t('t95 g', 'Add photos of kitchen below'))]), row(142, [20, chip(69, 70, 'tile')], [112, chip(69, 70, 'tile')]), row(142, [54, disc('cam', 28, 15, 'deep')], [146, disc('cam', 28, 15, 'deep')]),
    row(214, [20, t('t9 b', 'Kitchen Closed')], [98, toggle('left')]), row(242, [20, t('t9 b', 'Flag For Repair')], [98, toggle('red')])]), big(17, 444, 'Start Job')]);

const otherServ = frame(3405, 1569, 258, 707, 'other-ser...', [head('Other Services').slice(0, 2), row(82, [15, t('head', 'Service Detail - FB')]),
  box(11, 103, 237, 61, 'card', [row(21, [9, t('t9 b', 'Total Waste Collected')]), row(30, [154, chip(74, 24, 'input on')], [163, t('t85', '38')]), row(39, [9, t('t85', '(lbs)')])]),
  row(193, [15, t('head', 'Service Detail - FO')]), box(252, 184, 6, 42, 'thumb'),
  box(11, 214, 237, 60, 'card', [row(21, [9, t('t9 b', 'Oil Sold To Customers')]), row(30, [154, stepper]), row(39, [9, t('t85', '(gals)')])]),
  box(11, 285, 237, 60, 'card', [row(22, [9, t('t9 b', 'Oil Sold To Customer')]), row(30, [154, stepper]), row(40, [9, t('t85', '(Boxes)')])]),
  row(376, [15, t('head', 'Service Detail - DF')]), box(11, 397, 237, 60, 'card'), row(487, [15, t('head', 'Service Detail - FC')]),
  box(11, 508, 237, 61, 'card', [row(21, [15, t('t9 b', 'Filta Cool')]), row(30, [149, chip(74, 25, 'input')], [157, t('t8 lg', '00')]), row(39, [15, t('t85', 'Number of Panels Serviced')])]), big(16, 596, 'Next')]);
const badge = mid(chip(21, 21, 'disc deep t9', '2'));
const otherInfo = frame(3713, 1684, 258, 592, 'other-Info', [head('Other Info').slice(0, 2), row(93, [16, t('head', 'Additional Services')], [230, mid(`<span class="greenink">${ic('plus', 18)}</span>`)]),
  box(11, 114, 235, 42, 'card', [row(22, [15, t('t9 m', 'Deep Clean')], [91, badge], [177, mid(ic('pencil', 14))], [211, mid(ic('trash', 15))])]), row(186, [16, t('head', 'Service Flag')]),
  box(11, 207, 235, 41, 'card', [row(20, [26, mid(ic('head', 17))], [41, t('t9', 'Note To Filta Supervisor')], [195, toggle()])]), row(276, [16, t('head', 'Additional Service Notes')]),
  box(13, 296, 229, 170, 'bluebox', [box(10, 17, 212, 33, 'card', [row(17, [10, t('t9 g', 'Enter Notes To Customer here..')])]), row(70, [116, mid(t('t10 g', 'Add photos of kitchen below'))]), box(79, 89, 74, 66, 'card', [row(30, [37, disc('cam', 29, 15)])])]), big(16, 481, 'Next')]);
const additional = frame(3992, 1989, 258, 246, 'additional...', [handle, row(32, [129, mid(t('t85 g', 'Add Additional Services'))]), selectRow(74), formRow(131, 'Quantity', stepper), big(18, 180, 'Add')], { nav: false, c: 'sheet' });

const SIG = '<path d="M14 27C4 18-4 40 10 43S22 36 38 42C48 38 46 36 36 44S38 76 38 50L58 2M38 48C52 34 56 40 44 52M54 74C58 46 74 40 62 14M52 50C70 28 96 28 84 36S66 62 76 32C94 26 112 50 96 48S92 38 116 6C124 2 110 36 104 40M78 50C96 30 96 48 118 38C130 36 100 46 112 50C126 38 130 36 140 46" fill="none" stroke="#3a3a40" stroke-width="1.900"/>';
const sig = (x, y, s) => art(x, y, 142 * s, 78 * s, `<g transform="scale(${s})">${SIG}</g>`);
const sign = (x, name, title, filled, ph) => frame(x, 987, 258, 457, name, [head(title), sub(),
  filled ? [box(14, 130, 231, 160, 'sigbox'), sig(63, 172, 1), row(318, [14, chip(231, 28, 'input')], [23, t('t10 g', ph)])] : box(14, 130, 231, 202, 'sigbox', [row(103, [115, mid(t('t10 g', 'Customer Signature'))])]), big(17, 356, filled ? 'Complete' : 'Accept')]);

const S = { big: 1, v: 22, x1: 16, x2: 145, h: 39, gap: 11 };
const summary = [head('Service Summary'), sub(), row(123, [15, t('head', 'Fryers')]), pairCells(150, ['Last Service', 'Dump'], null, S), row(213, [15, t('head', 'Other Services')]),
  pairCells(240, ['Waste Oil Collected', '0 <small>(lbs)</small>'], ['Oil Delivered', '1 <small>(gals)</small>'], S), pairCells(298, ['Oil Delivered', '1 <small>boxes</small>'], ['Drain Serviced', '1'], S),
  row(365, [15, t('head', 'Additional Services')]), box(12, 386, 233, 60, 'card', [row(19, [15, t('t9 m', 'Deep Clean')], [89, badge])]),
  row(472, [16, t('head', 'Other Info')]), box(12, 493, 233, 40, 'card', [row(21, [15, t('t9 m', 'Service Flag')], [193, toggle()])]),
  pairCells(558, ['Live Location Date', '04/28/2022'], ['Live Location Time', '06:40 am'], { ...S, x1: 13, x2: 142 })];
const custSum = frame(5001, 979, 258, 973, 'customer-...', [summary, row(621, [15, t('head', 'Customer’s Signature')]), row(648, [16, t('t9', 'Customer’s Name : &nbsp;Wade Warren')]), sig(80, 667, .68),
  row(757, [15, t('head', 'Technician’s Signature')]), row(784, [16, t('t9', 'Technician’s Name : Andrew Francis')]), sig(80, 805, .68), big(18, 884, 'Finish')]);
const compA = frame(4316, 1683, 258, 742, 'complete-...', [summary, big(19, 623, 'Accept')]);
const K = { ...S, v: 21 };
const compB = frame(4702, 1695, 258, 457, 'complete-...', [head('Complete Kitchen'), sub(), row(117, [129, mid(t('t95 g', 'Service Summary'))]),
  pairCells(143, ['Fryers Serviced', '3', 'pale'], ['Oil Collected', '25 <small>lbs</small>'], K), pairCells(198, ['Oil Delivered', '2 <small>Boxes</small>', 'pale'], ['Drain Service', '0'], K),
  pairCells(253, ['Additional Services', '2 <small>FiltaCool Panels</small>', 'pale'], ['Service Flags', ''], K),
  row(270, [156, t('t8 b', 'Fryer 1 is dead on..')]), row(280, [156, t('t8 b', 'leg. service required')]),
  row(319, [16, chip(3, 40, 'pale')]), row(308, [27, t('t9 g', 'Notes')]), row(330, [27, chip(214, 22, 'input')], [41, t('t8 g', 'Enter Kitchen Notes here..')]), big(18, 357, 'Accept')]);

document.getElementById('canvas').innerHTML = [login, home, menu, last, openA, openB, openC, detail, driveStart, detail2, driveArr, svcD, svcLong, temp,
  customers, customers2, createJ, createJob, addServ, svcSum, map, arrival, jobStart, otherServ, otherInfo, additional,
  sign(3685, 'customer ...', 'Customer Signature', 0), sign(3969, 'customer ...', 'Customer Signature', 1, 'Enter Customer Name'), sign(4274, 'technician...', 'Technician Signature', 0), sign(4588, 'technician...', 'Technician Signature', 1, 'Enter Technician Name'),
  custSum, compA, compB, svcLast].join('');
```
